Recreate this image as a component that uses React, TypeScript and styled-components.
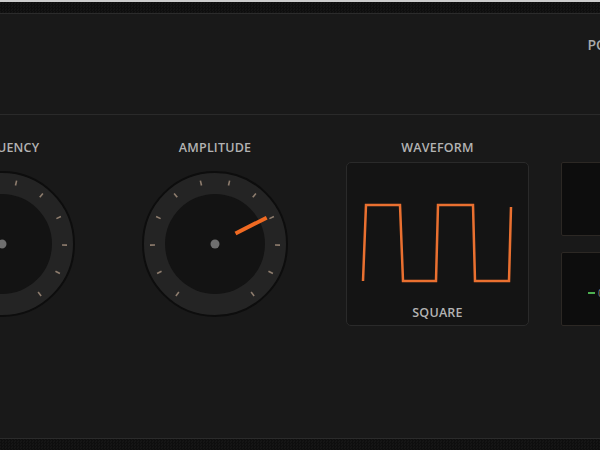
import React from 'react';
import styled, { createGlobalStyle } from 'styled-components';

const GlobalStyle = createGlobalStyle`
  html, body {
    margin: 0;
    padding: 0;
    overflow: hidden;
    background: #cdcdcd;
    font-family: 'Open Sans', 'Liberation Sans', sans-serif;
  }
`;

const Synth = styled.div`
  margin: 2px 0 0 -123px;
  width: 840px;
  padding: 11px;
  background: repeating-conic-gradient(#0e0e0e 0 25%, #151515 0 50%) 0 0 / 3px 3px;
`;

const Panel = styled.div`
  background: #191919;
  border: 1px solid #2b2b2b;
`;

const Header = styled.div`
  height: 101px;
  box-sizing: border-box;
  border-bottom: 1px solid #2a2a2a;
  display: flex;
  justify-content: flex-end;
  align-items: flex-start;
  padding: 22px 42px 0 0;
`;

const PowerGroup = styled.div`
  display: flex;
  align-items: center;
  gap: 12px;
`;

const PowerLabel = styled.span`
  font-size: 14px;
  line-height: 18px;
  font-weight: 600;
  color: #a9a9a9;
`;

const PowerSwitch = styled.div`
  width: 34px;
  height: 16px;
  border-radius: 8px;
  background: #0e0e0e;
  border: 1px solid #2c2c2c;
`;

const Controls = styled.div`
  height: 323px;
  box-sizing: border-box;
  padding: 25px 40px 0;
  display: flex;
  align-items: flex-start;
  gap: 58px;
`;

const Group = styled.div<{ $gap: number }>`
  display: flex;
  align-items: flex-start;
  gap: ${(p) => p.$gap}px;
`;

const Column = styled.div<{ $width: number }>`
  width: ${(p) => p.$width}px;
  display: flex;
  flex-direction: column;
  align-items: center;
`;

const Label = styled.div`
  height: 16px;
  line-height: 16px;
  margin-bottom: 6px;
  font-size: 12.5px;
  font-weight: 600;
  letter-spacing: 0.2px;
  color: #b3b3b3;
  white-space: nowrap;
`;

const Body = styled.div`
  height: 164px;
  width: 100%;
  display: flex;
  align-items: center;
  justify-content: center;
`;

const WaveBox = styled.div`
  width: 100%;
  height: 164px;
  box-sizing: border-box;
  border: 1px solid #2a2a2a;
  border-radius: 5px;
  background: #141414;
  display: flex;
  flex-direction: column;
  align-items: center;
  padding-top: 38px;
`;

const WaveName = styled(Label)`
  margin: 20px 0 0;
`;

const Displays = styled.div`
  width: 120px;
  height: 164px;
  margin-top: 22px;
  display: flex;
  flex-direction: column;
  justify-content: space-between;
`;

const Screen = styled.div`
  height: 74px;
  box-sizing: border-box;
  border: 1px solid #2c2824;
  border-radius: 2px;
  background: #0d0d0d;
  display: flex;
  align-items: center;
  gap: 3px;
  padding: 7px 0 0 26px;
`;

const LevelDash = styled.span`
  width: 7px;
  height: 2px;
  background: #4caf50;
`;

const LevelText = styled.span`
  font-size: 10px;
  color: #8d8d8d;
`;

const TICKS = Array.from({ length: 12 }, (_, i) => -143 + i * 26);

const Knob = ({ angle }: { angle: number }) => {
  const c = 73;
  const pt = (deg: number, r: number) => {
    const a = (deg * Math.PI) / 180;
    return [c + r * Math.sin(a), c - r * Math.cos(a)];
  };
  const [px1, py1] = pt(angle, 23);
  const [px2, py2] = pt(angle, 58);
  return (
    <svg width="146" height="146" viewBox="0 0 146 146">
      <circle cx={c} cy={c} r="72" fill="#242424" stroke="#0d0d0d" strokeWidth="2" />
      <circle cx={c} cy={c} r="50" fill="#131313" />
      {TICKS.map((t) => {
        const [x1, y1] = pt(t, 60);
        const [x2, y2] = pt(t, 65);
        return (
          <line key={t} x1={x1} y1={y1} x2={x2} y2={y2} stroke="#8e7d6e" strokeWidth="1.6" />
        );
      })}
      <line x1={px1} y1={py1} x2={px2} y2={py2} stroke="#f06a22" strokeWidth="4" />
      <circle cx={c} cy={c} r="4.5" fill="#6f6f6f" />
    </svg>
  );
};

const SquareWave = () => (
  <svg width="181" height="84" viewBox="0 0 181 84">
    <path
      d="M16 80 L19 4 L53 4 L56 80 L89 80 L91 4 L126 4 L128 80 L162 80 L164 6"
      fill="none"
      stroke="#ea7030"
      strokeWidth="2.5"
    />
  </svg>
);

export default function App() {
  return (
    <>
      <GlobalStyle />
      <Synth>
        <Panel>
          <Header>
            <PowerGroup>
              <PowerLabel>POWER</PowerLabel>
              <PowerSwitch />
            </PowerGroup>
          </Header>
          <Controls>
            <Group $gap={67}>
              <Column $width={146}>
                <Label>FREQUENCY</Label>
                <Body>
                  <Knob angle={-110} />
                </Body>
              </Column>
              <Column $width={146}>
                <Label>AMPLITUDE</Label>
                <Body>
                  <Knob angle={63} />
                </Body>
              </Column>
            </Group>
            <Group $gap={32}>
              <Column $width={183}>
                <Label>WAVEFORM</Label>
                <WaveBox>
                  <SquareWave />
                  <WaveName>SQUARE</WaveName>
                </WaveBox>
              </Column>
              <Displays>
                <Screen />
                <Screen>
                  <LevelDash />
                  <LevelText>0.0</LevelText>
                </Screen>
              </Displays>
            </Group>
          </Controls>
        </Panel>
      </Synth>
    </>
  );
}
